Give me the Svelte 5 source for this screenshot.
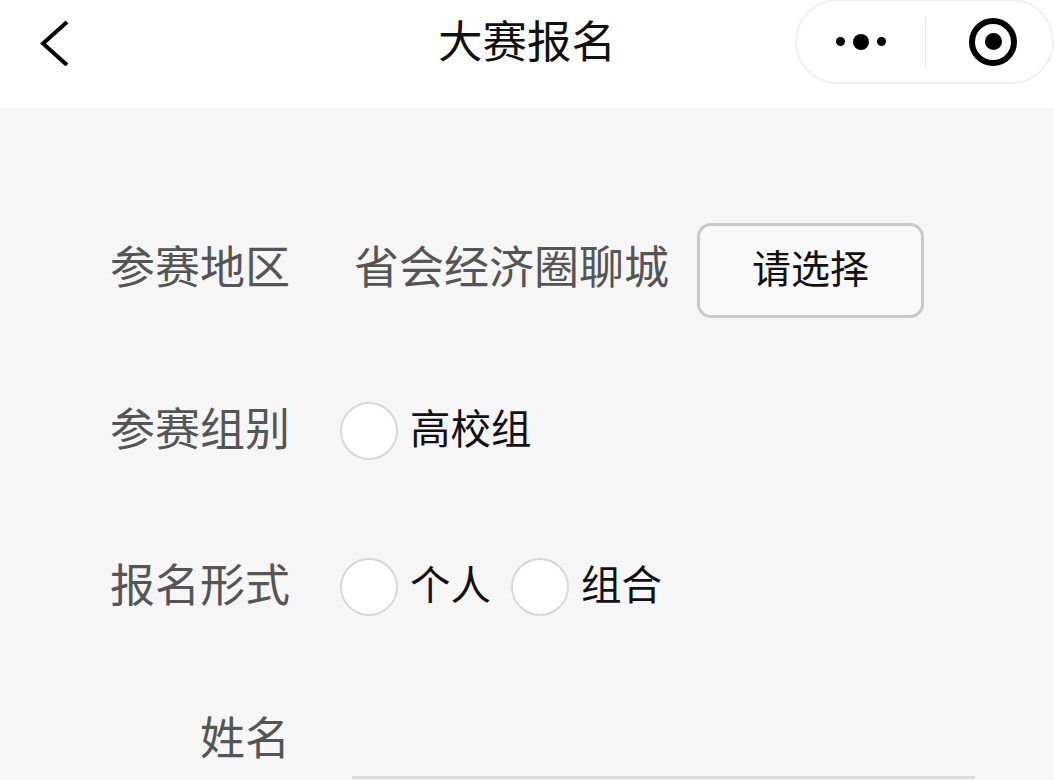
<script>
  const rows = [
    { label: '参赛组别', options: ['高校组'] },
    { label: '报名形式', options: ['个人', '组合'] }
  ];
</script>

<div class="page">
  <header class="nav">
    <button class="back" aria-label="返回">
      <svg width="30" height="46" viewBox="0 0 30 46"><path d="M27 2 L3 23.5 L27 45" fill="none" stroke="#000" stroke-width="4"/></svg>
    </button>
    <h1>大赛报名</h1>
    <div class="capsule">
      <span class="dots"><i></i><i class="big"></i><i></i></span>
      <span class="sep"></span>
      <span class="target"><i></i></span>
    </div>
  </header>

  <main class="form">
    <div class="row region">
      <span class="label">参赛地区</span>
      <span class="value">省会经济圈聊城</span>
      <button class="pick">请选择</button>
    </div>

    {#each rows as row}
      <div class="row">
        <span class="label">{row.label}</span>
        <div class="options">
          {#each row.options as option}
            <span class="option"><span class="radio"></span><span class="text">{option}</span></span>
          {/each}
        </div>
      </div>
    {/each}

    <div class="row name">
      <span class="label">姓名</span>
      <div class="field"></div>
    </div>
  </main>
</div>

<style>
  :global(body) { margin: 0; background: #f6f6f6; }
  .page {
    width: 1054px;
    height: 780px;
    overflow: hidden;
    background: #f6f6f6;
    font-family: "Noto Sans CJK SC", "Noto Sans", sans-serif;
  }
  .nav {
    position: relative;
    height: 108px;
    box-sizing: border-box;
    padding-bottom: 29px;
    background: #fff;
    display: flex;
    align-items: center;
    justify-content: center;
  }
  h1 { margin: 0; font-size: 44.5px; font-weight: 400; color: #111; line-height: 1; }
  .back {
    position: absolute;
    left: 40px;
    top: 20px;
    padding: 0;
    border: 0;
    background: none;
    display: flex;
  }
  .capsule {
    position: absolute;
    left: 795px;
    top: -1px;
    width: 259px;
    height: 85px;
    box-sizing: border-box;
    border: 2px solid #f0f0f0;
    border-radius: 43px;
    background: #fff;
    display: flex;
    align-items: center;
  }
  .dots { width: 128px; display: flex; align-items: center; justify-content: center; gap: 8px; }
  .dots i { width: 9px; height: 9px; border-radius: 50%; background: #000; }
  .dots i.big { width: 16px; height: 16px; }
  .sep { width: 1px; height: 50px; background: #e8e8e8; }
  .target {
    margin-left: 43px;
    width: 48px;
    height: 48px;
    box-sizing: border-box;
    border: 6px solid #000;
    border-radius: 50%;
    display: flex;
    align-items: center;
    justify-content: center;
  }
  .target i { width: 17px; height: 17px; border-radius: 50%; background: #000; }

  .form { padding: 115px 0 0 110px; }
  .row { display: flex; align-items: center; min-height: 76px; margin-bottom: 80px; }
  .region { margin-bottom: 75px; }
  .row.name { margin: -2px 0 0; }
  .label {
    width: 180px;
    flex: none;
    padding-bottom: 9px;
    text-align: right;
    font-size: 45px;
    line-height: 1;
    color: #555;
    white-space: nowrap;
  }
  .region .label, .name .label { padding-bottom: 12px; }
  .value { margin-left: 64px; padding-bottom: 12px; font-size: 45px; line-height: 1; color: #555; white-space: nowrap; }
  .pick {
    margin-left: 28px;
    width: 227px;
    height: 95px;
    box-sizing: border-box;
    border: 3px solid #c8c8c8;
    border-radius: 14px;
    background: #f8f8f8;
    font: inherit;
    font-size: 39px;
    color: #111;
    padding: 0 0 10px;
  }
  .options { margin-left: 50px; display: flex; gap: 20px; }
  .option { display: flex; align-items: center; gap: 12px; font-size: 40.5px; line-height: 1; color: #111; }
  .text { padding-bottom: 8px; }
  .radio {
    width: 58px;
    height: 58px;
    box-sizing: border-box;
    border: 2px solid #d8d8d8;
    border-radius: 50%;
    background: #fff;
  }
  .name { align-items: stretch; }
  .name .label { align-self: center; }
  .field { margin-left: 62px; width: 623px; border-bottom: 3px solid #dcdcdc; }
</style>
